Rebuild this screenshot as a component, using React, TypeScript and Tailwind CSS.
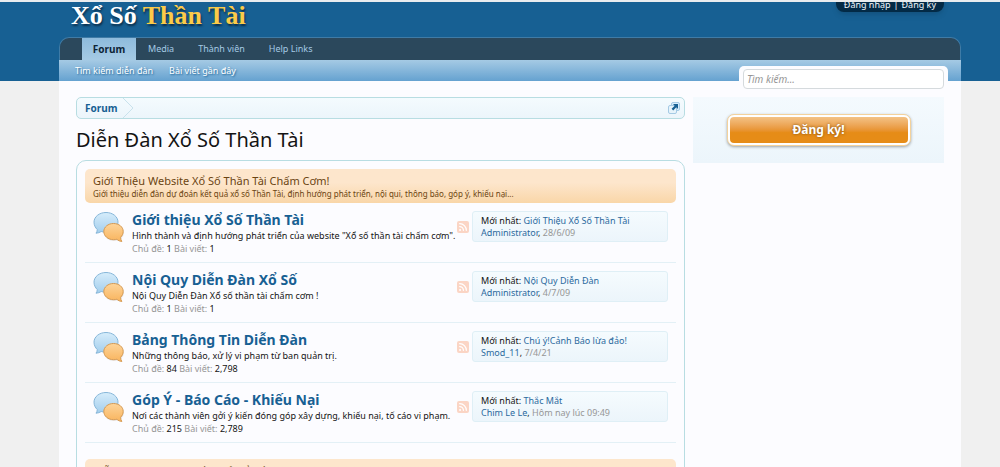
import { Rss } from "lucide-react";

const navTabs = ["Media", "Thành viên", "Help Links"];

const forums = [
  {
    title: "Giới thiệu Xổ Số Thần Tài",
    description: 'Hình thành và định hướng phát triển của website "Xổ số thần tài chấm cơm".',
    threads: "1",
    posts: "1",
    latest: { title: "Giới Thiệu Xổ Số Thần Tài", user: "Administrator", date: "28/6/09" },
  },
  {
    title: "Nội Quy Diễn Đàn Xổ Số",
    description: "Nội Quy Diễn Đàn Xổ số thần tài chấm cơm !",
    threads: "1",
    posts: "1",
    latest: { title: "Nội Quy Diễn Đàn", user: "Administrator", date: "4/7/09" },
  },
  {
    title: "Bảng Thông Tin Diễn Đàn",
    description: "Những thông báo, xử lý vi phạm từ ban quản trị.",
    threads: "84",
    posts: "2,798",
    latest: { title: "Chú ý!Cảnh Báo lừa đảo!", user: "Smod_11", date: "7/4/21" },
  },
  {
    title: "Góp Ý - Báo Cáo - Khiếu Nại",
    description: "Nơi các thành viên gởi ý kiến đóng góp xây dựng, khiếu nại, tố cáo vi phạm.",
    threads: "215",
    posts: "2,789",
    latest: { title: "Thắc Mắt", user: "Chim Le Le", date: "Hôm nay lúc 09:49" },
  },
];

type Forum = (typeof forums)[number];

function BubblesIcon() {
  return (
    <svg viewBox="0 0 32 32" className="mt-2 size-8 shrink-0" aria-hidden="true">
      <defs>
        <linearGradient id="blueBubble" x1="0" y1="0" x2="0" y2="1">
          <stop offset="0" stopColor="#d6edfb" />
          <stop offset="1" stopColor="#a3cdec" />
        </linearGradient>
        <linearGradient id="orangeBubble" x1="0" y1="0" x2="0" y2="1">
          <stop offset="0" stopColor="#fdd49a" />
          <stop offset="1" stopColor="#f9b45d" />
        </linearGradient>
      </defs>
      <ellipse cx="21" cy="22" rx="10" ry="8" fill="#000" opacity="0.08" />
      <path
        d="M13 1.500C6.500 1.500 1 5.600 1 11.200c0 3 1.400 5.600 3.300 7.400-.1 1.400-.5 2.500-1.300 3.600 2-.1 3.700-.7 5.200-1.700 1.500.5 3.100.7 4.800.7 6.500 0 12-4.300 12-10S19.500 1.500 13 1.500Z"
        fill="url(#blueBubble)"
        stroke="#86b6d9"
      />
      <path
        d="M20.500 12.500c5.400 0 9.700 3.400 9.700 7.900 0 2.400-1.100 4.400-2.600 5.900.1 1.600.4 2.900 1.200 4.200-1.900-.2-3.500-.9-4.900-2.200-1.100.3-2.200.4-3.400.4-5.400 0-9.700-3.700-9.700-8.200s4.300-8 9.700-8Z"
        fill="url(#orangeBubble)"
        stroke="#d69a52"
      />
    </svg>
  );
}

function JumpIcon() {
  return (
    <svg viewBox="0 0 12 12" className="size-3" aria-hidden="true">
      <rect x="3.500" y="0.500" width="8" height="8" rx="1.500" fill="#d7edfc" stroke="#a5cae4" />
      <rect x="0.500" y="3.500" width="8" height="8" rx="1.500" fill="#e6f3fb" stroke="#a5cae4" />
      <path d="M5 2h5v5L8.300 5.300 5.200 8.400 3.600 6.800 6.700 3.700Z" fill="#176093" />
    </svg>
  );
}

function CategoryStrip({ title, description }: { title: string; description?: string }) {
  return (
    <div className="h-[34px] rounded-[5px] bg-linear-to-b from-[#fde6cc] from-40% to-[#f9d6a8] px-2 pt-1 text-[#6b4411]">
      <h2 className="text-[11px] leading-[16px]">{title}</h2>
      {description && <p className="text-[8px] leading-[10px]">{description}</p>}
    </div>
  );
}

function ForumRow({ forum }: { forum: Forum }) {
  return (
    <li className="flex h-[60px] border-b border-[#e3f0f6] pl-2">
      <BubblesIcon />
      <div className="min-w-0 flex-1 pt-2 pl-[7px] whitespace-nowrap">
        <h3 className="text-[14px] leading-[18px] font-bold">
          <a href="#" className="text-[#176093]">{forum.title}</a>
        </h3>
        <p className="text-[9px] leading-[13px] text-[#141414]">{forum.description}</p>
        <p className="text-[9px] leading-[13px] text-[#969696]">
          Chủ đề: <span className="text-[#141414]">{forum.threads}</span> Bài viết:{" "}
          <span className="text-[#141414]">{forum.posts}</span>
        </p>
      </div>
      <a href="#" aria-label="RSS" className="mt-[18px] mr-[3px] flex size-3 items-center justify-center rounded-[2px] bg-[#fbd5c5] text-white">
        <Rss className="size-[10px]" strokeWidth={3} />
      </a>
      <div className="mt-2 mr-2 h-[31px] w-[196px] rounded-[3px] border border-[#dfeff6] bg-linear-to-b from-[#f5fbfe] to-[#ecf5fb] px-2 pt-[3px] text-[9px] leading-[12px] whitespace-nowrap text-[#969696]">
        <div>
          <span className="text-[#141414]">Mới nhất: </span>
          <a href="#" className="text-[#2b6a9e]">{forum.latest.title}</a>
        </div>
        <div>
          <a href="#" className="text-[#2b6a9e]">{forum.latest.user}</a>
          <span className="text-[#141414]">,</span> {forum.latest.date}
        </div>
      </div>
    </li>
  );
}

export default function App() {
  return (
    <div className="h-screen overflow-hidden border-t-2 border-[#e9ecee] bg-[#f0f0f0] font-['Noto_Sans',sans-serif] text-[#141414]">
      <header className="bg-[#176093] pr-[39px] pl-[59px]">
        <div className="flex h-[35px] justify-between overflow-hidden pr-[17px] pl-3">
          <a href="#" className="font-['Liberation_Serif',serif] text-[26px] leading-[28px] font-bold whitespace-nowrap text-white [text-shadow:1px_2px_2px_#0b2f4b]">
            Xổ Số <span className="text-[#fbcb49]">Thần Tài</span>
          </a>
          <div className="-mt-2 flex h-[18px] items-end gap-[3px] rounded-b-lg bg-[#032a46] px-2 pb-px text-[9px] leading-[12px] text-[#f0f7fc] shadow-md">
            <a href="#">Đăng nhập</a>
            <span>|</span>
            <a href="#">Đăng ký</a>
          </div>
        </div>
        <nav className="relative">
          <div className="flex h-[23px] rounded-t-[10px] border border-b-0 border-[#3f7ba6] bg-[#2b485c] pl-[22px] text-[9px] text-[#a5cae4]">
            <a href="#" className="w-[54px] bg-linear-to-b from-[#8ebbdc] to-[#a5cae4] text-center text-[10px] leading-[22px] font-bold text-[#0d2436]">
              Forum
            </a>
            {navTabs.map((tab) => (
              <a key={tab} href="#" className="px-3 leading-[22px]">{tab}</a>
            ))}
          </div>
          <div className="flex h-[21px] gap-4 bg-linear-to-b from-[#a5cae4] to-[#65a2d0] pl-4 text-[9px] leading-[22px] text-white [text-shadow:1px_1px_2px_#176093]">
            <a href="#">Tìm kiếm diễn đàn</a>
            <a href="#">Bài viết gần đây</a>
          </div>
          <form className="absolute top-[29px] right-[13px] w-[209px] rounded-t-[5px] bg-[#fcfcff] px-1 pt-[3px]">
            <input
              type="search"
              aria-label="Tìm kiếm"
              placeholder="Tìm kiếm..."
              className="block h-5 w-full rounded-[4px] border border-[#d5dadd] bg-white px-[3px] text-[10px] italic placeholder:text-[#969696]"
            />
          </form>
        </nav>
      </header>

      <div className="pr-[39px] pl-[59px]">
        <div className="flex items-start gap-2 bg-[#fcfcff] px-[17px] pt-4">
          <main className="min-w-0 flex-1">
            <nav className="flex h-[22px] items-center justify-between overflow-hidden rounded-[5px] border border-[#b8dde2] bg-linear-to-b from-[#f4fbfe] to-[#ecf5fb] pr-1">
              <div className="flex items-center">
                <a href="#" className="pl-2 text-[10px] font-bold text-[#176093]">Forum</a>
                <svg viewBox="0 0 12 20" className="ml-[6px] h-5 w-3" fill="none" stroke="#c9e2ec" aria-hidden="true">
                  <path d="M0 0 10 10 0 20" />
                </svg>
              </div>
              <a href="#" aria-label="Mở menu">
                <JumpIcon />
              </a>
            </nav>
            <h1 className="mt-[7px] text-[20px] leading-[28px]">Diễn Đàn Xổ Số Thần Tài</h1>
            <div className="mt-[6px] rounded-[10px] border border-[#b8dde2] px-2 pt-2">
              <CategoryStrip
                title="Giới Thiệu Website Xổ Số Thần Tài Chấm Cơm!"
                description="Giới thiệu diễn đàn dự đoán kết quả xổ số Thần Tài, định hướng phát triển, nội qui, thông báo, góp ý, khiếu nại..."
              />
              <ol>
                {forums.map((forum) => (
                  <ForumRow key={forum.title} forum={forum} />
                ))}
              </ol>
              <div className="mt-4">
                <CategoryStrip title="Diễn Đàn Dự Đoán Kết Quả Xổ Số" />
              </div>
            </div>
          </main>
          <aside className="flex h-[66px] w-[251px] shrink-0 justify-center bg-linear-to-b from-[#f4fafe] to-[#ecf5fb] pt-[17px]">
            <button
              type="button"
              className="h-8 w-[184px] rounded-[7px] border border-[#f3d29c] bg-white p-[2px] shadow-[0_1px_3px_#0005]"
            >
              <span className="block rounded-[4px] bg-linear-to-b from-[#f3c285] to-[#e68c17] to-60% text-[12px] leading-[26px] font-bold text-white [text-shadow:0_0_3px_#7a4a08]">
                Đăng ký!
              </span>
            </button>
          </aside>
        </div>
      </div>
    </div>
  );
}
